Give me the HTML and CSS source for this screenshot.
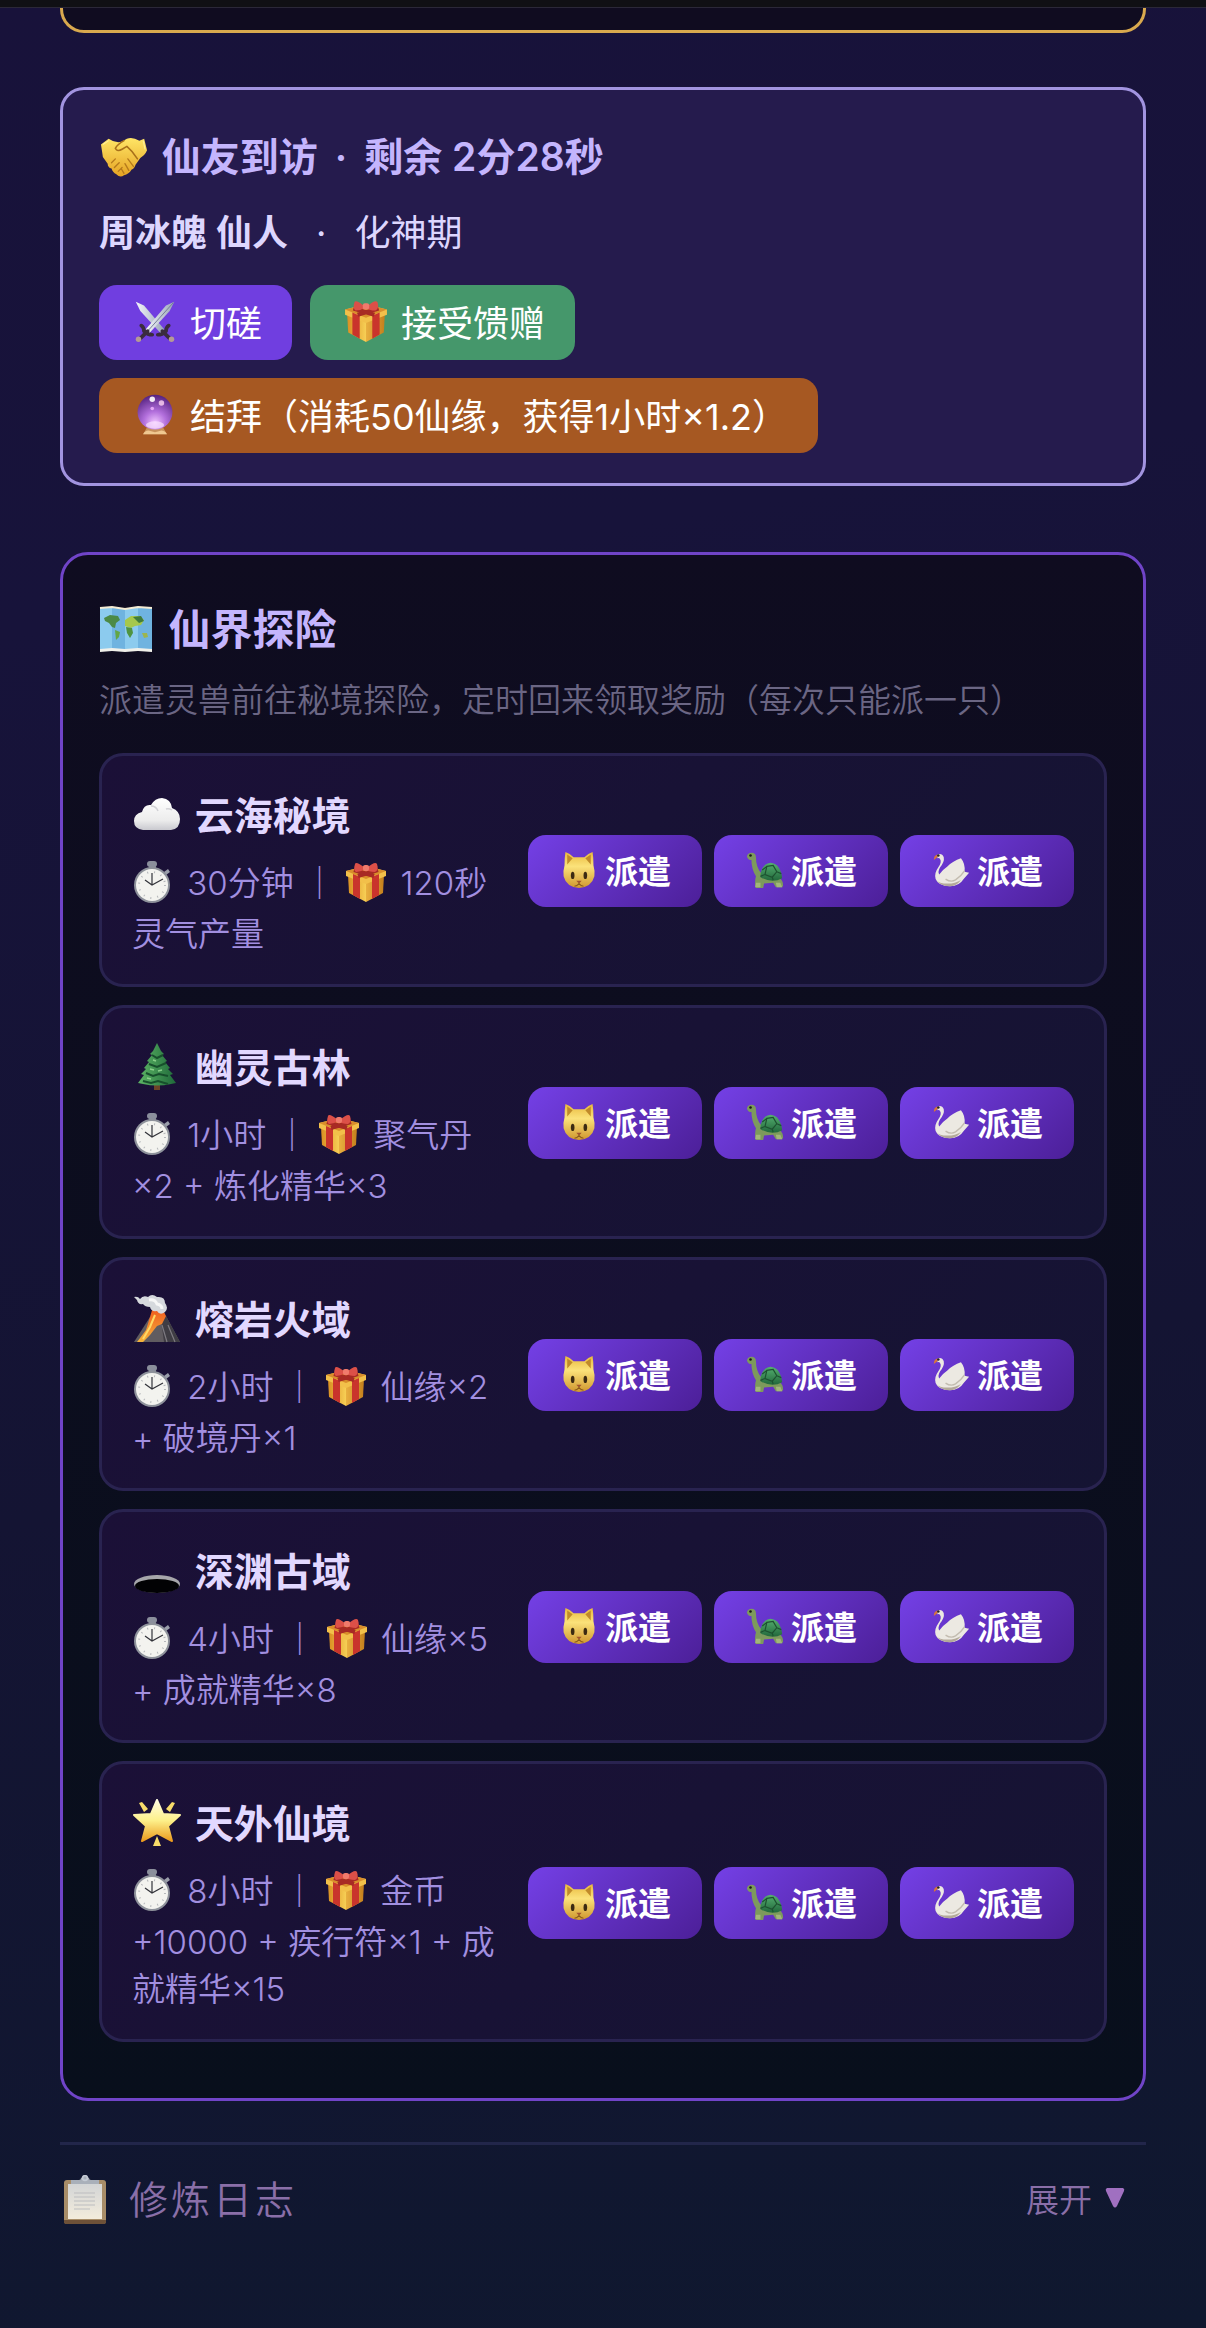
FILE: index.html
```
<!DOCTYPE html>
<html lang="zh-CN">
<head>
    <meta charset="UTF-8">
    <meta name="viewport" content="width=device-width, initial-scale=1">

    <title>修仙</title>

    <link rel="stylesheet" href="styles.css">
</head>
<body>
    <!-- 图标 -->
    <svg class="sprite" aria-hidden="true">
        <defs>
            <linearGradient id="gYellow" x1="0" y1="0" x2="0" y2="1">
                <stop offset="0" stop-color="#ffe566"/>
                <stop offset="1" stop-color="#e5a323"/>
            </linearGradient>
            <linearGradient id="gCat" x1="0" y1="0" x2="0" y2="1">
                <stop offset="0" stop-color="#e8b83c"/>
                <stop offset="0.4" stop-color="#fbe27a"/>
                <stop offset="1" stop-color="#cf962e"/>
            </linearGradient>
            <linearGradient id="gStar" x1="0" y1="0" x2="0" y2="1">
                <stop offset="0" stop-color="#fffde0"/>
                <stop offset="0.5" stop-color="#fdf08a"/>
                <stop offset="1" stop-color="#eb9b1e"/>
            </linearGradient>
            <linearGradient id="gBlade" x1="0" y1="0" x2="1" y2="0">
                <stop offset="0" stop-color="#f4f6fb"/>
                <stop offset="1" stop-color="#9aa6b8"/>
            </linearGradient>
            <linearGradient id="gBoxL" x1="0" y1="0" x2="1" y2="0">
                <stop offset="0" stop-color="#d98f22"/>
                <stop offset="1" stop-color="#f7cf55"/>
            </linearGradient>
            <linearGradient id="gBoxR" x1="0" y1="0" x2="1" y2="0">
                <stop offset="0" stop-color="#e9b040"/>
                <stop offset="1" stop-color="#c47f1c"/>
            </linearGradient>
            <radialGradient id="gOrb" cx="0.5" cy="0.8" r="0.8">
                <stop offset="0" stop-color="#f0c4ff"/>
                <stop offset="0.4" stop-color="#b26fdc"/>
                <stop offset="1" stop-color="#54217f"/>
            </radialGradient>
            <linearGradient id="gCloud" x1="0" y1="0" x2="0" y2="1">
                <stop offset="0" stop-color="#ffffff"/>
                <stop offset="0.7" stop-color="#ececec"/>
                <stop offset="1" stop-color="#c9c9cf"/>
            </linearGradient>
            <linearGradient id="gTree" x1="0" y1="0" x2="1" y2="0">
                <stop offset="0" stop-color="#5db565"/>
                <stop offset="1" stop-color="#1f6a3a"/>
            </linearGradient>
            <linearGradient id="gLava" x1="0" y1="0" x2="0" y2="1">
                <stop offset="0" stop-color="#f0531c"/>
                <stop offset="1" stop-color="#f5b43c"/>
            </linearGradient>
            <linearGradient id="gShell" x1="0" y1="0" x2="0" y2="1">
                <stop offset="0" stop-color="#55b070"/>
                <stop offset="1" stop-color="#22683c"/>
            </linearGradient>
            <linearGradient id="gPaper" x1="0" y1="0" x2="0" y2="1">
                <stop offset="0" stop-color="#d3d5d6"/>
                <stop offset="1" stop-color="#f3ecdc"/>
            </linearGradient>
        </defs>

        <symbol id="handshake" viewBox="0 0 50 50">
            <path d="M1 13 9 7q7 5 14 3l5-3q6-2 13 2l5-2 3 12q-2 5-7 8l-5 7q-1 4-4 5-3 5-8 6-4 3-8-1-4-2-5-6-4-1-4-5l-5-7Q2 19 1 13z" fill="url(#gYellow)"/>
            <path d="M25 9q-7 4-9 8 2 4 7 1l5-3q6 5 11 13" fill="none" stroke="#a8701a" stroke-width="1.6" stroke-linecap="round"/>
            <path d="M12 32l4-4M15 37l5-5M19 41l4-4M25 43l-3-5M30 40l-4-7M35 36l-6-8" stroke="#b57a1c" stroke-width="1.4" stroke-linecap="round"/>
            <path d="M3 13l6-4M45 9l2 9" stroke="#fff09a" stroke-width="1.2"/>
        </symbol>

        <symbol id="swords" viewBox="0 0 48 48">
            <path d="M3 3l9 4 22 26-4 4L8 13z" fill="url(#gBlade)"/>
            <path d="M45 3l-9 4-22 26 4 4 22-24z" fill="url(#gBlade)"/>
            <path d="M44 4 16 35" stroke="#6d7990" stroke-width="1"/>
            <path d="M9 29q3 2 3 6 4 4 9 4M8 43l8-8M39 29q-3 2-3 6-4 4-9 4M40 43l-8-8" fill="none" stroke="#3a2c3e" stroke-width="4" stroke-linecap="round"/>
            <circle cx="6" cy="44" r="3" fill="#b59a94"/>
            <circle cx="42" cy="44" r="3" fill="#b59a94"/>
        </symbol>

        <symbol id="gift" viewBox="0 0 42 42">
            <path d="M3 14l18 8v19L4 32z" fill="url(#gBoxL)"/>
            <path d="M39 14l-18 8v19l17-9z" fill="url(#gBoxR)"/>
            <path d="M1 10 21 5l20 5v5l-20 8L1 15z" fill="#f2c04a"/>
            <path d="M1 10l20 8 20-8-20-5z" fill="#d98e2b"/>
            <path d="M8 13l7 3v22l-7-4zM34 13l-7 3v22l7-4z" fill="#c9342c"/>
            <path d="M9 9l20 6M33 9l-20 6" stroke="#a82a24" stroke-width="4"/>
            <path d="M20 7Q11 0 10 3q-2 6 1 8 5 0 9-3 4 3 10 3 4-2 2-8Q30 0 22 7z" fill="#dc5048"/>
            <rect x="18" y="4" width="6" height="6" rx="2" fill="#f07a6c"/>
        </symbol>

        <symbol id="orb" viewBox="0 0 42 48">
            <path d="M12 39h18l4 7H8z" fill="#c8925c"/>
            <path d="M8 46q2-4 6-4l7 2 7-2q5 1 6 4z" fill="#f0c890"/>
            <circle cx="21" cy="22" r="19" fill="url(#gOrb)"/>
            <ellipse cx="21" cy="36" rx="10" ry="4" fill="#fbe2ff" opacity="0.7"/>
            <circle cx="18" cy="8" r="3" fill="#fff" opacity="0.9"/>
            <circle cx="28" cy="12" r="3" fill="#ffd6f3" opacity="0.8"/>
            <circle cx="18" cy="18" r="2" fill="#f2b8ff" opacity="0.8"/>
        </symbol>

        <symbol id="map" viewBox="0 0 54 46">
            <path d="M1 2l12-1 13 2 13-2 14 1v43l-14-1-13 1-13-1-12 1z" fill="#8ccbee"/>
            <path d="M13 1l13 2v42l-13-1zM39 1l14 1v43l-14-1z" fill="#6fb3e0"/>
            <path d="M1 2l12-1 13 2 13-2 14 1" fill="none" stroke="#f4ecd4" stroke-width="2"/>
            <path d="M1 43l12-1 13 1 13-1 14 1v3l-14-1-13 1-13-1-12 1z" fill="#f0f0ea"/>
            <path d="M5 12l6-3 8 1 2 4-4 3-1 5-3-1-3-4-4-2z" fill="#4c8a45"/>
            <path d="M16 24l5 2-1 5-3 3z" fill="#63a644"/>
            <path d="M26 14l6-4 9 0 4 4-3 5-6 1-4 2-6-2z" fill="#a6c84c"/>
            <path d="M34 11l8-1 3 5-5 2z" fill="#3f7c3c"/>
            <path d="M27 21l6 1 1 5-3 5-3-5z" fill="#4f9440"/>
            <path d="M43 27l5 0 1 4-4 1z" fill="#9cb54f"/>
        </symbol>

        <symbol id="cloud" viewBox="0 0 48 48">
            <path d="M10 39q-9-1-9-9 0-7 8-9 2-8 9-7 4-7 11-7 9 1 10 10 8 3 8 11 0 10-9 11z" fill="url(#gCloud)"/>
            <path d="M18 15q5 0 7 5M39 19q-3-2-6-1" fill="none" stroke="#d2d2d6" stroke-width="1.5"/>
        </symbol>

        <symbol id="tree" viewBox="0 0 48 48">
            <rect x="21" y="40" width="6" height="7" fill="#6c4327"/>
            <path d="M24 0l4 8 3 3-2 1 5 6-2 1 5 6-2 1 5 5-3 1 6 8-5 1q-14 3-28 0l-5-1 6-8-3-1 5-5-2-1 5-6-2-1 5-6-2-1 3-3z" fill="url(#gTree)"/>
            <path d="M19 12l5 3 6-3M16 21l8 3 9-4M13 30l7 3 6-2 9 2M10 38l8 2 7-2 10 3" fill="none" stroke="#174f2c" stroke-width="2"/>
            <path d="M20 17l3 1M17 26l4 1M14 35l4 1M25 28l4-1" stroke="#8ad08a" stroke-width="1.4"/>
        </symbol>

        <symbol id="volcano" viewBox="0 0 48 48">
            <path d="M17 22 1 47h46L33 21z" fill="#605c60"/>
            <path d="M33 21l14 26H31L28 25z" fill="#3f3d44"/>
            <path d="M29 30l5 17M35 30l7 17" stroke="#7d7a80" stroke-width="1.2"/>
            <path d="M17 22l3-10 8-1 5 10-4 8-5 2-7 9-7 7H4l9-12z" fill="url(#gLava)"/>
            <path d="M22 20l-5 12-7 12" fill="none" stroke="#ffd964" stroke-width="2"/>
            <path d="M1 2q4-1 6 2 3-4 8-2 4-4 9 0 8-1 8 6 4 5 0 9-5 4-8-1-6 1-7-4-5 0-7-3-5 1-6-4z" fill="#d6d9dd"/>
            <path d="M16 5q6-1 8 4 5 1 5 5" fill="none" stroke="#f7f7f7" stroke-width="3"/>
        </symbol>

        <symbol id="hole" viewBox="0 0 48 48">
            <ellipse cx="24" cy="37" rx="23" ry="9" fill="#a6a6aa"/>
            <ellipse cx="24" cy="39" rx="22" ry="7" fill="#020204"/>
        </symbol>

        <symbol id="star" viewBox="0 0 48 48">
            <path d="M24 1l6 14 17 1-12 11 4 15-15-8-15 8 4-15L1 16l17-1z" fill="url(#gStar)" stroke="url(#gStar)" stroke-width="2" stroke-linejoin="round"/>
            <path d="M6 4l3-1 6 7-4 3zM42 4l-3-1-6 7 4 3zM24 37l4 10h-8z" fill="#f7dc6a"/>
        </symbol>

        <symbol id="timer" viewBox="0 0 42 42">
            <rect x="17" y="5" width="7" height="5" fill="#7d828c"/>
            <rect x="15" y="0" width="10" height="6" rx="3" fill="#8b8f9c"/>
            <path d="M32 11l4-3 2 3-4 3z" fill="#9a9eaa"/>
            <circle cx="20" cy="24" r="18" fill="#8e929b"/>
            <circle cx="20" cy="24" r="16" fill="#f3f3ef"/>
            <circle cx="20" cy="24" r="13" fill="none" stroke="#b6b8bb" stroke-width="2" stroke-dasharray="1 6"/>
            <path d="M13 19l7 5 11-6M20 24V12" fill="none" stroke="#33343a" stroke-width="1.2"/>
        </symbol>

        <symbol id="cat" viewBox="0 0 42 42">
            <path d="M6 1q6 2 9 6h12q3-4 9-6 1 6 1 15 2 7 1 12-3 12-17 13Q7 40 4 28q-1-5 1-12Q5 7 6 1z" fill="url(#gCat)"/>
            <path d="M8 4l6 4-6 7zM34 4l-6 4 6 7z" fill="#c08a2a"/>
            <ellipse cx="14" cy="27" rx="2" ry="4" fill="#3b2a12"/>
            <ellipse cx="28" cy="27" rx="2" ry="4" fill="#3b2a12"/>
            <path d="M18 33h6l-3 3z" fill="#a1542c"/>
            <path d="M16 39q3 0 5-3 2 3 5 3" fill="none" stroke="#8a5a1a" stroke-width="1.2"/>
        </symbol>

        <symbol id="turtle" viewBox="0 0 42 42">
            <path d="M1 6q1-4 5-4 5 0 5 5 0 11 6 18l20 5q4 2 4 8l-1 2h-7l-3-5-10 1-1 5h-8q-2-6 0-13Q6 20 6 10q-4 0-5-4z" fill="#7d9a5c"/>
            <path d="M16 29q0-14 11-16 11 1 13 17-11 6-24-1z" fill="url(#gShell)"/>
            <path d="M23 17l7-1 4 7-5 6-8-3zM23 17l-5 4M34 23l5 2M29 29l1 3M21 26l-5 2" fill="none" stroke="#1d5230" stroke-width="1.3"/>
            <circle cx="5" cy="5" r="1.4" fill="#161b12"/>
            <path d="M11 35h5v5h-6zM33 35h5l2 5h-6z" fill="#a3b67a"/>
        </symbol>

        <symbol id="swan" viewBox="0 0 42 42">
            <path d="M6 4q5-2 7 3 1 5-4 11-3 5-1 8 3-5 9-9 6-6 15-9 5 6 4 15l5 1-6 7q-5 8-15 8-13 0-16-8-2-6 3-13 4-6 2-9-1-2-3-1z" fill="#ece9e2"/>
            <path d="M15 31q6 4 11 1 6-4 10-10" fill="none" stroke="#c3bcb0" stroke-width="1.6"/>
            <path d="M4 32q4 4 13 4 9 0 15-4-5 7-13 7T4 32z" fill="#b3a99a"/>
            <path d="M6 4q-4 1-4 6l4-3z" fill="#d8743a"/>
            <circle cx="7" cy="5" r="1.4" fill="#2a2222"/>
        </symbol>

        <symbol id="clipboard" viewBox="0 0 44 50">
            <rect x="1" y="5" width="42" height="44" rx="3" fill="#a88d68"/>
            <path d="M1 45h42v2q0 2-3 2H4q-3 0-3-2z" fill="#6e5138"/>
            <rect x="5" y="9" width="34" height="35" fill="url(#gPaper)"/>
            <path d="M11 18h21M11 22h21M11 26h21M11 30h21M11 34h16" stroke="#bcbdbf" stroke-width="1"/>
            <path d="M8 5h8q2 0 2-2 4-4 8 0 0 2 2 2h8v4H8z" fill="#a9b0ba"/>
            <circle cx="22" cy="3" r="2.4" fill="none" stroke="#c4cad4" stroke-width="1.6"/>
        </symbol>

        <symbol id="arrow" viewBox="0 0 22 24">
            <path d="M3 2h16q2 1 1 3l-7 15q-2 3-4 0L2 5q-1-2 1-3z" fill="#a070c0"/>
        </symbol>
    </svg>

    <header class="topbar"></header>

    <main class="page">
        <section class="card-prev"></section>

        <section class="card visit">
            <h2 class="visit-title"><svg class="icon icon-title"><use href="#handshake"/></svg> 仙友到访<span class="dot-title">·</span>剩余 2分28秒</h2>
            <p class="visit-name"><strong>周冰魄 仙人</strong><span class="dot">·</span>化神期</p>
            <div class="visit-actions">
                <button type="button" class="btn btn-fight"><svg class="icon icon-btn"><use href="#swords"/></svg>切磋</button>
                <button type="button" class="btn btn-gift"><svg class="icon icon-btn"><use href="#gift"/></svg>接受馈赠</button>
                <button type="button" class="btn btn-bond"><svg class="icon icon-btn"><use href="#orb"/></svg>结拜（消耗50仙缘，获得1小时×1.2）</button>
            </div>
        </section>

        <section class="card explore">
            <h2 class="explore-title"><svg class="icon icon-map"><use href="#map"/></svg> 仙界探险</h2>
            <p class="explore-desc">派遣灵兽前往秘境探险，定时回来领取奖励（每次只能派一只）</p>

            <ul class="places">
                <li class="place">
                    <div class="place-info">
                        <h3><svg class="icon icon-title"><use href="#cloud"/></svg> 云海秘境</h3>
                        <p><svg class="icon icon-sub"><use href="#timer"/></svg> 30分钟 ｜ <svg class="icon icon-sub"><use href="#gift"/></svg> 120秒灵气产量</p>
                    </div>
                    <div class="pets">
                        <button type="button" class="pet"><svg class="icon icon-pet"><use href="#cat"/></svg>派遣</button>
                        <button type="button" class="pet"><svg class="icon icon-pet"><use href="#turtle"/></svg>派遣</button>
                        <button type="button" class="pet"><svg class="icon icon-pet"><use href="#swan"/></svg>派遣</button>
                    </div>
                </li>

                <li class="place">
                    <div class="place-info">
                        <h3><svg class="icon icon-title"><use href="#tree"/></svg> 幽灵古林</h3>
                        <p><svg class="icon icon-sub"><use href="#timer"/></svg> 1小时 ｜ <svg class="icon icon-sub"><use href="#gift"/></svg> 聚气丹<wbr>×2 + 炼化精华×3</p>
                    </div>
                    <div class="pets">
                        <button type="button" class="pet"><svg class="icon icon-pet"><use href="#cat"/></svg>派遣</button>
                        <button type="button" class="pet"><svg class="icon icon-pet"><use href="#turtle"/></svg>派遣</button>
                        <button type="button" class="pet"><svg class="icon icon-pet"><use href="#swan"/></svg>派遣</button>
                    </div>
                </li>

                <li class="place">
                    <div class="place-info">
                        <h3><svg class="icon icon-title"><use href="#volcano"/></svg> 熔岩火域</h3>
                        <p><svg class="icon icon-sub"><use href="#timer"/></svg> 2小时 ｜ <svg class="icon icon-sub"><use href="#gift"/></svg> 仙缘×2 + 破境丹×1</p>
                    </div>
                    <div class="pets">
                        <button type="button" class="pet"><svg class="icon icon-pet"><use href="#cat"/></svg>派遣</button>
                        <button type="button" class="pet"><svg class="icon icon-pet"><use href="#turtle"/></svg>派遣</button>
                        <button type="button" class="pet"><svg class="icon icon-pet"><use href="#swan"/></svg>派遣</button>
                    </div>
                </li>

                <li class="place">
                    <div class="place-info">
                        <h3><svg class="icon icon-title"><use href="#hole"/></svg> 深渊古域</h3>
                        <p><svg class="icon icon-sub"><use href="#timer"/></svg> 4小时 ｜ <svg class="icon icon-sub"><use href="#gift"/></svg> 仙缘×5 + 成就精华×8</p>
                    </div>
                    <div class="pets">
                        <button type="button" class="pet"><svg class="icon icon-pet"><use href="#cat"/></svg>派遣</button>
                        <button type="button" class="pet"><svg class="icon icon-pet"><use href="#turtle"/></svg>派遣</button>
                        <button type="button" class="pet"><svg class="icon icon-pet"><use href="#swan"/></svg>派遣</button>
                    </div>
                </li>

                <li class="place">
                    <div class="place-info">
                        <h3><svg class="icon icon-title"><use href="#star"/></svg> 天外仙境</h3>
                        <p><svg class="icon icon-sub"><use href="#timer"/></svg> 8小时 ｜ <svg class="icon icon-sub"><use href="#gift"/></svg> 金币<wbr>+10000 + 疾行符×1 + 成就精华×15</p>
                    </div>
                    <div class="pets">
                        <button type="button" class="pet"><svg class="icon icon-pet"><use href="#cat"/></svg>派遣</button>
                        <button type="button" class="pet"><svg class="icon icon-pet"><use href="#turtle"/></svg>派遣</button>
                        <button type="button" class="pet"><svg class="icon icon-pet"><use href="#swan"/></svg>派遣</button>
                    </div>
                </li>
            </ul>
        </section>

        <section class="log">
            <h2 class="log-title"><svg class="icon icon-log"><use href="#clipboard"/></svg>修炼日志</h2>
            <button type="button" class="log-toggle">展开<svg class="icon icon-arrow"><use href="#arrow"/></svg></button>
        </section>
    </main>
</body>
</html>
```
FILE: styles.css
```
* {
    box-sizing: border-box;
}

html {
    min-height: 100%;
    background: linear-gradient(170deg, #18123a 0%, #17133a 25%, #141433 60%, #0f182f 100%);
}

body {
    margin: 0;
    font-family: Inter, "Noto Sans CJK SC", sans-serif;
    color: #ddd6fe;
}

h2,
h3,
p,
ul {
    margin: 0;
    padding: 0;
}

button {
    border: none;
    font-family: inherit;
    cursor: pointer;
}

.sprite {
    position: absolute;
    width: 0;
    height: 0;
}

/* icons */
.icon {
    flex: none;
}

.icon-title {
    width: 50px;
    height: 48px;
    margin-right: 3px;
    vertical-align: -9px;
}

.icon-map {
    width: 54px;
    height: 46px;
    margin-right: 5px;
    vertical-align: -7px;
}

.icon-btn {
    width: 46px;
    height: 44px;
}

/* the margins make the line with icons taller than the plain ones */
.icon-sub {
    width: 42px;
    height: 42px;
    margin: 7px 4px 8px 0;
    vertical-align: -16px;
}

.icon-pet {
    width: 40px;
    height: 38px;
}

.icon-log {
    width: 44px;
    height: 50px;
}

.icon-arrow {
    width: 22px;
    height: 24px;
}

.topbar {
    height: 8px;
    background: #101014;
    border-bottom: 1px solid #2b2838;
}

.page {
    padding: 0 60px 90px;
}

.card-prev {
    height: 25px;
    background: #100c20;
    border: 3px solid #d9a94e;
    border-top: none;
    border-radius: 0 0 24px 24px;
}

.card {
    border: 3px solid;
    border-radius: 24px;
}

/* visitor */
.visit {
    margin-top: 54px;
    padding: 36px 36px 30px;
    background: #251b4d;
    border-color: #a294e0;
}

.visit-title {
    margin-bottom: 15px;
    font-size: 39px;
    font-weight: 600;
    line-height: 62px;
    color: #c4b5fd;
}

.visit-name {
    margin-bottom: 22px;
    font-size: 36px;
    line-height: 60px;
}

.visit-name strong {
    font-weight: 600;
}

.dot-title {
    padding: 0 17px;
}

.dot {
    padding: 0 28px;
}

.visit-actions {
    display: flex;
    flex-wrap: wrap;
    gap: 18px;
}

.btn {
    display: flex;
    align-items: center;
    gap: 12px;
    height: 75px;
    padding: 0 30px 3px 33px;
    border-radius: 18px;
    font-size: 36px;
    color: #fff;
}

.btn-fight {
    background: #703ee0;
}

.btn-gift {
    background: #45976b;
}

.btn-bond {
    background: #a65822;
}

/* exploration */
.explore {
    margin-top: 66px;
    padding: 45px 36px 56px;
    background: linear-gradient(#0f0c20, #080f1c);
    border-color: #7044c8;
    border-radius: 28px;
}

.explore-title {
    margin-bottom: 15px;
    font-size: 42px;
    font-weight: 600;
    line-height: 60px;
    color: #c4b5fd;
}

.explore-desc {
    margin-bottom: 28px;
    font-size: 33px;
    font-weight: 350;
    line-height: 50px;
    color: #6b6684;
}

.places {
    display: flex;
    flex-direction: column;
    gap: 18px;
    list-style: none;
}

.place {
    display: flex;
    align-items: center;
    gap: 30px;
    padding: 28px 30px 26px;
    background: linear-gradient(135deg, #1b1037, #151433);
    border: 3px solid #292350;
    border-radius: 24px;
}

.place-info {
    flex: 1;
}

.place-info h3 {
    margin-bottom: 6px;
    font-size: 39px;
    font-weight: 600;
    line-height: 64px;
    color: #e2d8ff;
}

.place-info p {
    font-size: 33px;
    font-weight: 350;
    line-height: 47px;
    color: #a28fe0;
}

.pets {
    display: flex;
    gap: 12px;
}

.pet {
    display: flex;
    align-items: center;
    gap: 6px;
    height: 72px;
    padding: 0 31px 2px;
    border-radius: 18px;
    background: linear-gradient(135deg, #7440e6, #4c1f98);
    font-size: 33px;
    font-weight: 600;
    color: #fff;
}

/* log */
.log {
    display: flex;
    align-items: center;
    justify-content: space-between;
    margin-top: 41px;
    padding: 25px 20px 0 3px;
    border-top: 3px solid #22264a;
}

.log-title {
    display: flex;
    align-items: center;
    gap: 22px;
    font-size: 39px;
    font-weight: 350;
    line-height: 60px;
    letter-spacing: 3px;
    color: #8a6fa8;
}

.log-toggle {
    display: flex;
    align-items: center;
    gap: 12px;
    padding: 0 0 4px;
    background: none;
    font-size: 33px;
    font-weight: 350;
    color: #8a6fa8;
}
```
